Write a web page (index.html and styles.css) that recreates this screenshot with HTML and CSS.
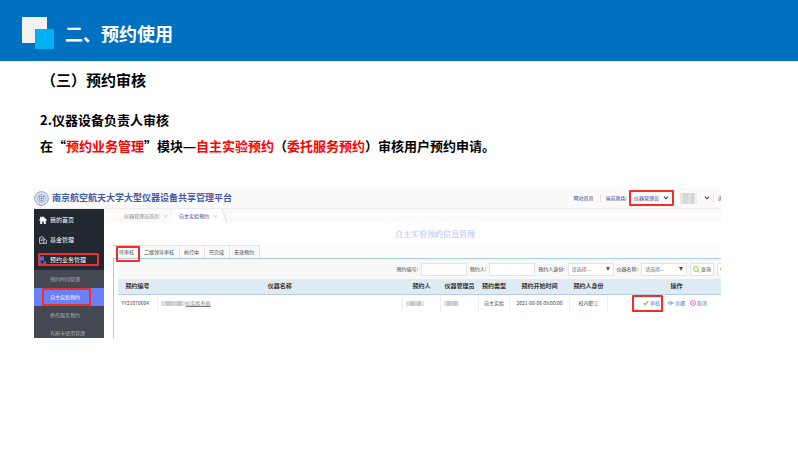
FILE: index.html
```html
<!DOCTYPE html>
<html lang="zh-CN">
<head>
<meta charset="utf-8">
<title>预约使用</title>
<link rel="stylesheet" href="styles.css">
</head>
<body>
<header class="banner">
  <svg class="mark" viewBox="0 0 32 32" aria-hidden="true"><path fill="#f2f2f2" d="M0 0h25v26H0z"/><path fill="#00b0f0" d="M13 12h19v20H13z"/></svg>
  <h1>二、预约使用</h1>
</header>
<main class="slide">
  <h2>（三）预约审核</h2>
  <div class="intro">
    <p>2.仪器设备负责人审核</p>
    <p>在“<em>预约业务管理</em>”模块<span class="dash">—</span><em>自主实验预约</em>（<em>委托服务预约</em>）审核用户预约申请。</p>
  </div>
  <section class="app">
    <div class="topbar">
      <svg class="seal" viewBox="0 0 16 16" aria-hidden="true" fill="none" stroke="#7385bd"><circle cx="8" cy="8" r="7.3" stroke-width=".8"/><circle cx="8" cy="8" r="6" stroke-dasharray="1 .8" stroke-width="1.2" opacity=".6"/><circle cx="8" cy="8" r="4.2" stroke-width=".8"/><path d="M5 6h6M5.5 8h5M6 10h4M8 4.5v7M6 5v5M10 5v5" stroke-width=".7"/></svg>
      <strong class="brand">南京航空航天大学大型仪器设备共享管理平台</strong>
      <nav class="usernav">
        <a class="home" href="#">网站首页</a>
        <label class="role-label" for="role">当前角色:</label>
        <span class="role marked">
          <select id="role"><option>仪器管理员</option></select>
          <svg class="chev" viewBox="0 0 6 4" aria-hidden="true"><path d="M1 .7 3 2.8 5 .7" fill="none" stroke="#3a3a9c" stroke-width="1.1"/></svg>
        </span>
        <span class="mosaic user"></span>
        <svg class="chev" viewBox="0 0 6 4" aria-hidden="true"><path d="M1 .7 3 2.8 5 .7" fill="none" stroke="#3a3a9c" stroke-width="1.1"/></svg>
        <a class="quit" href="#">退</a>
      </nav>
    </div>
    <div class="body">
      <aside class="side">
        <ul class="menu">
          <li><a href="#"><svg viewBox="0 0 8 8" aria-hidden="true"><path fill="#fff" d="M4 .2 8 4 7.3 4.7 6.8 4.2V8H4.8V5.4H3.2V8H1.2V4.2L.7 4.7 0 4l1.1-1V.8h1.2v1z"/></svg>我的首页</a></li>
          <li><a href="#"><svg viewBox="0 0 8 8" aria-hidden="true" fill="none" stroke="#dfe3ea" stroke-width=".8"><path d="M.6 7.4V1.6L2.8.6l2 1v5.8zM1.7 3h2M1.7 4.6h2M4.8 3.4h1.4l1.2 1.2v2.8H4.8"/></svg>基金管理</a></li>
          <li><a class="marked" href="#"><svg viewBox="0 0 8 8" aria-hidden="true"><path fill="#4f68dc" d="M1 .4h4v4.2H1z"/><path d="M1.3 5v2.4h2M4.6 7.4h2.6L6 5z" fill="none" stroke="#6f86f5" stroke-width=".8"/></svg>预约业务管理</a></li>
        </ul>
        <ul class="submenu">
          <li><a href="#">预约时间管理</a></li>
          <li class="current"><a class="marked" href="#">自主实验预约</a></li>
          <li><a href="#">委托服务预约</a></li>
          <li><a href="#">有刷卡使用管理</a></li>
        </ul>
      </aside>
      <div class="content">
        <div class="pagetabs">
          <a href="#">仪器管理员首页<span>×</span></a>
          <a class="active" href="#">自主实验预约<span>×</span></a>
        </div>
        <h3>自主实验预约信息管理</h3>
        <div class="states">
          <button class="on marked">待审核</button><button>二级领导审核</button><button>执行中</button><button>已完成</button><button>无效预约</button>
        </div>
        <div class="panel">
          <form class="search">
            <label for="no">预约编号:</label><input id="no" type="text">
            <label for="who">预约人:</label><input id="who" type="text">
            <label for="kind">预约人身份:</label><span class="pick"><select id="kind"><option>请选择...</option></select></span>
            <label for="name">仪器名称:</label><span class="pick"><select id="name"><option>请选择...</option></select></span>
            <button type="button"><svg viewBox="0 0 8 8" aria-hidden="true" fill="none" stroke="#8fc31f" stroke-width="1.1"><circle cx="3.4" cy="3.4" r="2.7"/><path d="m5.4 5.4 2.2 2.2"/></svg>查询</button>
            <button type="button" aria-label="重置"><svg viewBox="0 0 8 8" aria-hidden="true" fill="none" stroke="#8fc31f" stroke-width="1.1"><circle cx="3.4" cy="3.4" r="2.7"/><path d="m5.4 5.4 2.2 2.2"/></svg></button>
          </form>
          <table>
            <colgroup><col class="c-no"><col><col class="c-mid"><col class="c-mid"><col class="c-type"><col class="c-time"><col class="c-mid"><col class="c-act"></colgroup>
            <thead><tr><th>预约编号</th><th>仪器名称</th><th>预约人</th><th>仪器管理员</th><th>预约类型</th><th>预约开始时间</th><th>预约人身份</th><th>操作</th></tr></thead>
            <tbody><tr>
              <td class="code">YY21070604</td>
              <td class="device"><a href="#"><span class="mosaic long"></span>仪实验系统</a></td>
              <td class="left"><span class="mosaic"></span></td>
              <td class="left"><span class="mosaic short"></span></td>
              <td>自主实验</td>
              <td>2021-08-06 09:00:00</td>
              <td>校内职工</td>
              <td><div class="acts">
                <a class="marked" href="#"><svg viewBox="0 0 7 6" aria-hidden="true"><path d="m.6 3 2 2L6.4.8" fill="none" stroke="#8ccb24" stroke-width="1.5"/></svg>审核</a>
                <a href="#"><svg viewBox="0 0 7 6" aria-hidden="true" fill="none" stroke="#5b7fae" stroke-width=".8"><ellipse cx="2.7" cy="3" rx="2.2" ry="1.5"/><path d="M2.2 3h4.5"/></svg>详细</a>
                <a href="#"><svg viewBox="0 0 6 6" aria-hidden="true" fill="none" stroke="#d65db1" stroke-width=".8"><circle cx="3" cy="3" r="2.5"/><path d="m1.2 1.2 3.6 3.6"/></svg>取消</a>
              </div></td>
            </tr></tbody>
          </table>
        </div>
      </div>
    </div>
  </section>
</main>
</body>
</html>
```

FILE: styles.css
```css
* { box-sizing: border-box; }
body {
  margin: 0;
  background: #fff;
  color: #000;
  font-family: "Noto Sans CJK SC", sans-serif;
}
h1, h2, h3, p, ul { margin: 0; padding: 0; font-weight: bold; }
ul { list-style: none; font-weight: normal; }
a { color: inherit; text-decoration: none; }
button, input, select { margin: 0; padding: 0; border: 0; font: inherit; color: inherit; background: none; }
svg { flex: none; }

.banner {
  display: flex;
  align-items: center;
  gap: 11px;
  height: 61px;
  padding: 4px 22px 0;
  background: #0070c0;
  color: #fff;
}
.mark { width: 32px; height: 32px; }
h1 { font-size: 18px; line-height: 24px; }

.slide { padding: 8px 77px 0 34px; }
h2 { padding-left: 7px; font-size: 15px; line-height: 22px; }
.intro { padding: 16px 0 0 6px; font-size: 13px; line-height: 26px; white-space: nowrap; }
.intro em { font-style: normal; color: #f00; }
.dash { font-family: "Open Sans", sans-serif; }

.marked { position: relative; }
.marked::after {
  content: "";
  position: absolute;
  inset: 0;
  border: 2px solid #f03028;
  border-radius: 1px;
  pointer-events: none;
}
.mosaic {
  display: inline-block;
  width: 18px;
  height: 5px;
  vertical-align: middle;
  background: linear-gradient(90deg, #ddd 0 20%, #c8c8cc 20% 45%, #d4d4d8 45% 65%, #c4c4c8 65% 85%, #e6e6e6 85%);
}
.mosaic.short { width: 15px; }
.mosaic.long { width: 25px; }
.mosaic.user { width: 17px; height: 11px; opacity: .7; }

.app { margin-top: 29px; overflow: hidden; font-size: 5px; line-height: 8px; white-space: nowrap; }
.topbar {
  display: flex;
  align-items: center;
  height: 21px;
  background: #fbfaf8;
  border-bottom: 1px solid #ededed;
  color: #3a3a9c;
}
.seal { width: 15px; height: 15px; margin-right: 3px; }
.brand { font-size: 9px; line-height: 14px; color: #3c5bb0; }
.usernav { display: flex; align-items: center; margin: 0 -2px 0 auto; }
.home { padding-right: 6px; border-right: 1px solid #e4e4e4; }
.role-label { padding: 0 2px 0 5px; }
.role { display: flex; align-items: center; width: 45px; height: 16px; padding: 0 5px; }
select { appearance: none; flex: 1; min-width: 0; line-height: 8px; }
.chev { width: 6px; height: 4px; }
.user { margin: 0 7px 0 6px; }
.quit { margin-left: 3px; padding-left: 4px; border-left: 1px solid #e4e4e4; }

.body { display: flex; }
.side { flex: none; width: 70px; background: #434852; color: #fff; }
.menu { padding-bottom: 1px; background: #222831; font-size: 6px; }
.menu li { padding: 4px 5px 3px; }
.menu a { display: flex; align-items: center; gap: 3px; height: 13px; }
.menu .marked::after { inset: 0 0 0 -1px; }
.menu svg { width: 8px; height: 8px; }
.submenu { height: 68px; overflow: hidden; color: #a9adb5; }
.submenu li { height: 18px; padding: 0 13px 0 8px; }
.submenu a { display: block; padding-left: 8px; line-height: 18px; }
.submenu .current { background: #6b7ffa; color: #fff; }

.content { display: flex; flex-direction: column; flex: 1; min-width: 0; }
.pagetabs { display: flex; height: 14px; padding-left: 16px; background: #fbfaf8; color: #888; line-height: 14px; }
.pagetabs a { position: relative; padding: 0 4px; }
.pagetabs a::after {
  content: "";
  position: absolute;
  inset: 0 -2px 0 auto;
  border-right: 1px solid #dedede;
  transform: skewX(20deg);
}
.pagetabs span { padding-left: 4px; color: #aaa; }
.pagetabs .active { padding: 0 5px 0 7px; background: #fff; color: #3a3a9c; }
h3 {
  padding-left: 45px;
  color: #a6b1f6;
  font: 8px/22px "Noto Serif CJK SC", "Noto Sans CJK SC", serif;
  text-align: center;
}
.states { display: flex; height: 14px; margin-left: 9px; background: #fcfcfc; border-bottom: 1px solid #a5cdec; color: #444; }
.states button { padding: 0 5px 0 4px; border: solid #e2e2e2; border-width: 1px 1px 0 0; background: #f9f9f9; line-height: 12px; }
.states .on { padding: 0 5px 0 6px; background: #fff; border-color: #a5cdec; }
.states .on::after { inset: 0 -1px -4px 3px; }

.panel { flex: 1; margin: 0 -25px 0 9px; padding-left: 4px; border-left: 1px solid #a5cdec; }
.search { display: flex; align-items: center; justify-content: flex-end; height: 20px; padding-right: 15px; background: #f8f8f8; color: #444; }
.search label { padding: 0 3px; }
.search input, .pick { width: 46px; height: 13px; background: #fff; border: 1px solid #e4e4e4; }
.pick { display: flex; align-items: center; padding: 0 3px; color: #777; }
.pick::after { content: ""; border: solid transparent; border-width: 4px 2px 0; border-top-color: #555; }
.search button { display: flex; align-items: center; height: 13px; margin-left: 3px; padding: 0 2px; border: 1px solid #e4e4e4; background: #fff; }
.search svg { width: 7px; height: 7px; margin-right: 1px; }

table { width: 100%; border-collapse: collapse; table-layout: fixed; }
.c-no { width: 39px; }
.c-mid { width: 38px; }
.c-type { width: 31px; }
.c-time { width: 60px; }
.c-act { width: 138px; }
th { height: 15px; padding: 0; background: #dfebf3; border-bottom: 1px solid #b5cfe6; color: #333; font-size: 6px; }
td { height: 17px; padding: 0; border-right: 1px solid #eee; color: #444; text-align: center; }
.code { padding-right: 4px; }
.left, .device { padding-left: 3px; text-align: left; }
.device a { text-decoration: underline; color: #777; }
.acts { display: flex; align-items: center; gap: 5px; padding-left: 24px; color: #3d7ec0; }
.acts a { display: flex; align-items: center; gap: 1px; }
.acts svg { width: 6px; height: 6px; }
.acts .marked { height: 17px; padding: 0 3px 0 11px; }
```
